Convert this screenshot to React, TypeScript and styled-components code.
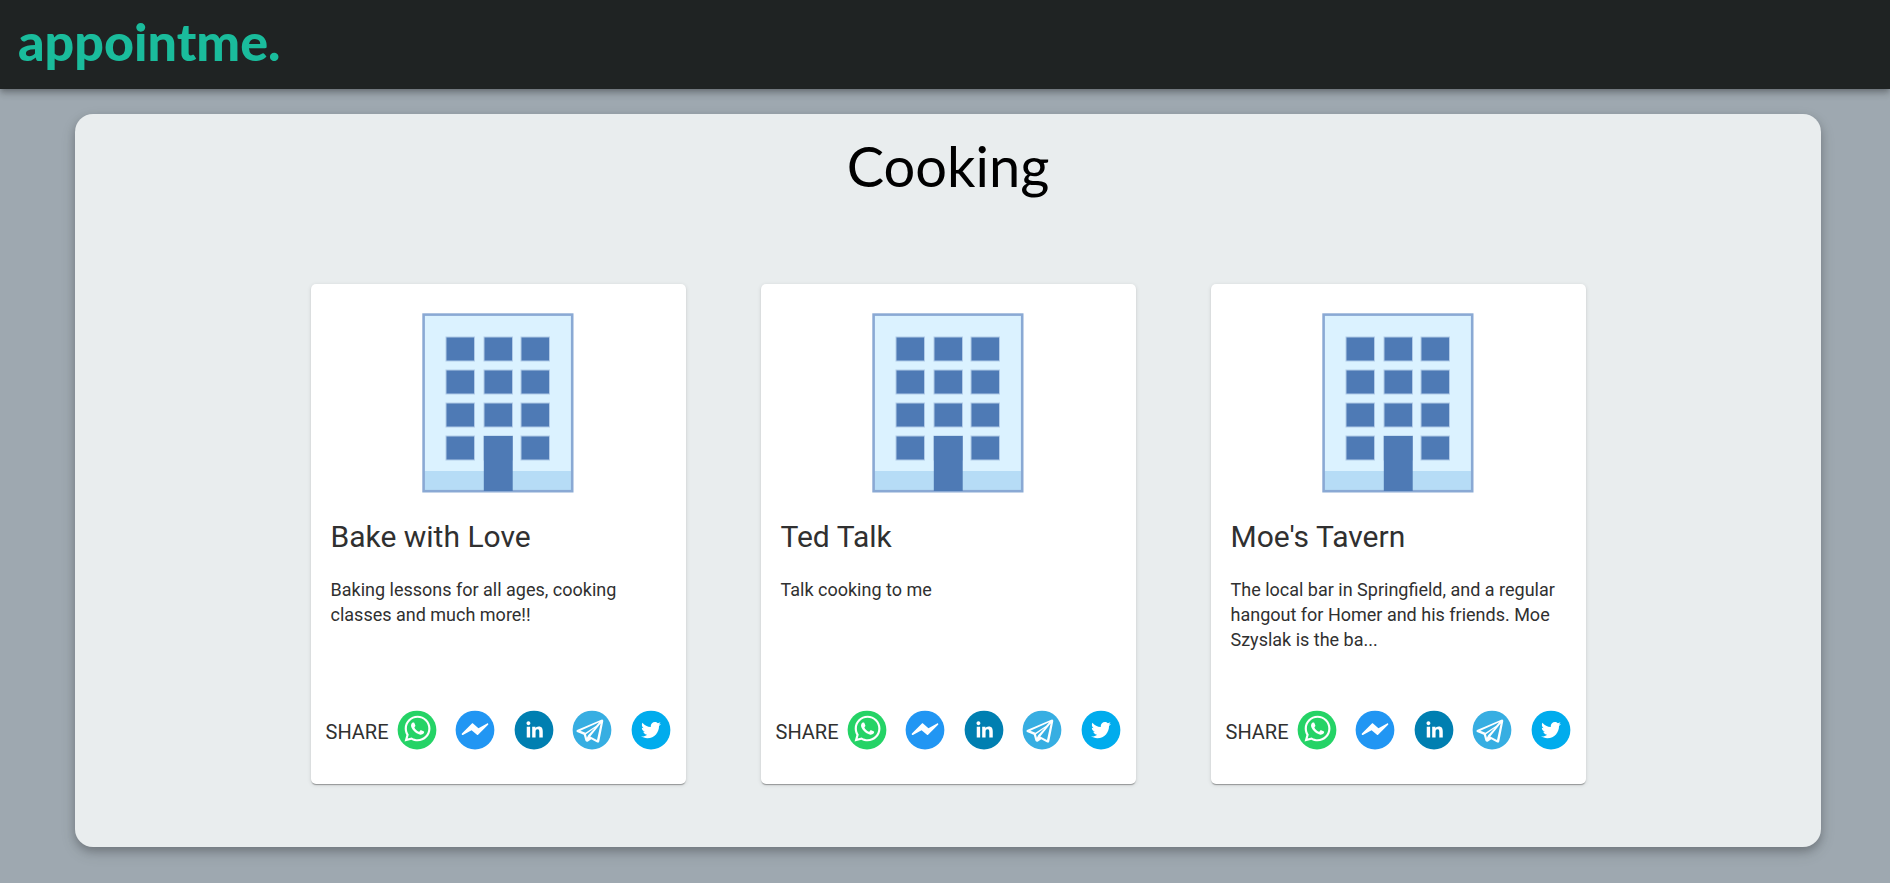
import React from "react";
import styled, { createGlobalStyle } from "styled-components";

const GlobalStyle = createGlobalStyle`
  *, *::before, *::after { box-sizing: border-box; }
  body {
    margin: 0;
    background: #9ea8b0;
    color: #303030;
    font-family: Roboto, "Liberation Sans", sans-serif;
  }
`;

const Header = styled.header`
  height: 89px;
  padding: 0 18px;
  background: #1f2323;
  box-shadow: 0 2px 5px -1px rgba(0, 0, 0, 0.2), 0 5px 6px rgba(0, 0, 0, 0.14), 0 1px 12px rgba(0, 0, 0, 0.12);
`;

const Logo = styled.a`
  display: inline-block;
  color: #1abc9c;
  font-family: Lato, sans-serif;
  font-size: 52px;
  font-weight: 900;
  line-height: 82px;
  text-decoration: none;
`;

const Panel = styled.main`
  margin: 25px 69px 36px 75px;
  padding: 12px 0 63px;
  background: #e9edee;
  border-radius: 18px;
  box-shadow: 0 4px 8px rgba(0, 0, 0, 0.2), 0 6px 16px rgba(0, 0, 0, 0.12);
`;

const Heading = styled.h1`
  margin: 0 0 78px;
  color: #000;
  font-family: Lato, sans-serif;
  font-size: 56px;
  font-weight: 400;
  line-height: 80px;
  text-align: center;
`;

const CardList = styled.div`
  display: flex;
  flex-wrap: wrap;
  justify-content: center;
  gap: 75px;
`;

const Card = styled.article`
  display: flex;
  flex-direction: column;
  width: 375px;
  min-height: 500px;
  padding: 29px 0 34px;
  background: #fff;
  border-radius: 5px;
  box-shadow: 0 2px 1px -1px rgba(0, 0, 0, 0.2), 0 1px 1px rgba(0, 0, 0, 0.14), 0 1px 4px rgba(0, 0, 0, 0.12);
`;

const Picture = styled.svg`
  display: block;
  align-self: center;
`;

const CardBody = styled.div`
  flex: 1;
  padding: 24px 20px;
`;

const CardTitle = styled.h2`
  margin: 0 0 20px;
  font-size: 30px;
  font-weight: 400;
  line-height: 40px;
`;

const Description = styled.p`
  margin: 0;
  font-size: 18px;
  line-height: 25px;
`;

const ShareRow = styled.div`
  display: flex;
  align-items: center;
  justify-content: space-between;
  padding: 0 15px;
`;

const ShareGroup = styled.div`
  display: flex;
  align-items: center;
  gap: 8px;
`;

const ShareLabel = styled.span`
  padding-top: 4px;
  font-size: 20px;
  line-height: 30px;
`;

const ShareButton = styled.button`
  display: block;
  padding: 0;
  border: 0;
  background: transparent;
  cursor: pointer;

  svg { display: block; }
`;

const windowRows = [24, 57, 90, 123];
const windowColumns = [24, 62, 99];

const Building = () => (
  <Picture width="152" height="180" viewBox="0 0 152 180" role="img" aria-label="Office building">
    <rect x="1" y="1" width="150" height="178" fill="#dbf2ff" />
    <rect x="1" y="158" width="150" height="21" fill="#b6dcf6" />
    <rect x="1.6" y="1.6" width="148.6" height="176.6" fill="none" stroke="#8aa9d4" strokeWidth="2.6" />
    {windowRows.map((y) =>
      windowColumns.map((x) => (
        <rect key={`${x}-${y}`} x={x} y={y} width="28.5" height="24" fill="#4e7ab5" stroke="#b1cbe8" strokeWidth="1" />
      )),
    )}
    <rect x="61.8" y="123" width="28.9" height="55" fill="#4e7ab5" />
  </Picture>
);

const networks = [
  {
    name: "WhatsApp",
    color: "#25d366",
    path: "m42.32286,33.93287c-0.5178,-0.2589 -3.04726,-1.49644 -3.52105,-1.66732c-0.4712,-0.17346 -0.81554,-0.2589 -1.15987,0.2589c-0.34175,0.51004 -1.33075,1.66474 -1.63108,2.00648c-0.30032,0.33658 -0.60064,0.36247 -1.11327,0.12945c-0.5178,-0.2589 -2.17994,-0.80259 -4.14759,-2.56312c-1.53269,-1.37217 -2.56312,-3.05503 -2.86603,-3.57283c-0.30033,-0.5178 -0.03366,-0.80259 0.22524,-1.06149c0.23301,-0.23301 0.5178,-0.59547 0.7767,-0.90616c0.25372,-0.31068 0.33657,-0.53333 0.51262,-0.85437c0.17088,-0.36246 0.08544,-0.64725 -0.04402,-0.90615c-0.12945,-0.2589 -1.15987,-2.79613 -1.58964,-3.80584c-0.41424,-1.00971 -0.84142,-0.88027 -1.15987,-0.88027c-0.29773,-0.02588 -0.64208,-0.02588 -0.98382,-0.02588c-0.34693,0 -0.90616,0.12945 -1.37736,0.62136c-0.4712,0.5178 -1.80194,1.76053 -1.80194,4.27186c0,2.51134 1.84596,4.945 2.10227,5.30747c0.2589,0.33657 3.63497,5.51458 8.80262,7.74113c1.23237,0.5178 2.1903,0.82848 2.94111,1.08738c1.23237,0.38836 2.35599,0.33657 3.24402,0.20712c0.99159,-0.15534 3.04985,-1.24272 3.47963,-2.45956c0.44013,-1.21683 0.44013,-2.22654 0.31068,-2.45955c-0.12945,-0.23301 -0.46601,-0.36247 -0.98382,-0.59548m-9.40068,12.84407l-0.02589,0c-3.05503,0 -6.08417,-0.82849 -8.72495,-2.38189l-0.62136,-0.37023l-6.47252,1.68286l1.73463,-6.29129l-0.41424,-0.64725c-1.70875,-2.71846 -2.6149,-5.85116 -2.6149,-9.07706c0,-9.39809 7.68934,-17.06155 17.15993,-17.06155c4.58253,0 8.88029,1.78642 12.11655,5.02268c3.23625,3.21036 5.02267,7.50812 5.02267,12.06476c-0.0078,9.3981 -7.69712,17.06155 -17.14699,17.06155m14.58906,-31.58846c-3.93529,-3.80584 -9.1133,-5.95471 -14.62789,-5.95471c-11.36055,0 -20.60848,9.2065 -20.61625,20.52564c0,3.61684 0.94757,7.14565 2.75211,10.26282l-2.92557,10.63564l10.93337,-2.85309c3.0136,1.63108 6.4052,2.4958 9.85634,2.49839l0.01037,0c11.36574,0 20.61884,-9.2091 20.62403,-20.53082c0,-5.48093 -2.14111,-10.64081 -6.03239,-14.51915",
  },
  {
    name: "Messenger",
    color: "#2196f3",
    path: "M 53.066406 21.871094 C 52.667969 21.339844 51.941406 21.179688 51.359375 21.496094 L 37.492188 29.058594 L 28.867188 21.660156 C 28.339844 21.207031 27.550781 21.238281 27.054688 21.730469 L 11.058594 37.726562 C 10.539062 38.25 10.542969 39.09375 11.0625 39.613281 C 11.480469 40.027344 12.121094 40.121094 12.640625 39.839844 L 26.503906 32.28125 L 35.136719 39.677734 C 35.667969 40.132812 36.457031 40.101562 36.949219 39.609375 L 52.949219 23.613281 C 53.414063 23.140625 53.464844 22.398438 53.066406 21.871094 Z",
  },
  {
    name: "LinkedIn",
    color: "#007fb1",
    path: "M20.4,44h5.4V26.6h-5.4V44z M23.1,18c-1.7,0-3.1,1.4-3.1,3.1c0,1.7,1.4,3.1,3.1,3.1 c1.7,0,3.1-1.4,3.1-3.1C26.2,19.4,24.8,18,23.1,18z M39.5,26.2c-2.6,0-4.4,1.4-5.1,2.8h-0.1v-2.4h-5.2V44h5.4v-8.6 c0-2.3,0.4-4.5,3.2-4.5c2.8,0,2.8,2.6,2.8,4.6V44H46v-9.5C46,29.8,45,26.2,39.5,26.2z",
  },
  {
    name: "Telegram",
    color: "#37aee2",
    path: "M48.2 15.2Q50.4 15.2 50 17.8L43.6 50.2Q42.8 53 40.4 51.8L30.8 46.9L25 50.6Q22 51.4 21.3 48.5L18.8 39.6L8 35.2Q5.8 33.4 8 31.8L46.8 15.6ZM43.6 19.7L13.4 33.3L21.6 36.4L38.6 25.2ZM45.8 21.6L29.2 42.2L40 47.8ZM36.5 28.8L22.4 38.7L23.8 44.5L25.8 40.2Z",
  },
  {
    name: "Twitter",
    color: "#00aced",
    path: "M48,22.1c-1.2,0.5-2.4,0.9-3.8,1c1.4-0.8,2.4-2.1,2.9-3.6c-1.3,0.8-2.7,1.3-4.2,1.6 C41.7,19.8,40,19,38.2,19c-3.6,0-6.6,2.9-6.6,6.6c0,0.5,0.1,1,0.2,1.5c-5.5-0.3-10.3-2.9-13.5-6.9c-0.6,1-0.9,2.1-0.9,3.3 c0,2.3,1.2,4.3,2.9,5.5c-1.1,0-2.1-0.3-3-0.8c0,0,0,0.1,0,0.1c0,3.2,2.3,5.8,5.3,6.4c-0.6,0.1-1.1,0.2-1.7,0.2c-0.4,0-0.8,0-1.2-0.1 c0.8,2.6,3.3,4.5,6.1,4.6c-2.2,1.8-5.1,2.8-8.2,2.8c-0.5,0-1.1,0-1.6-0.1c2.9,1.9,6.4,2.9,10.1,2.9c12.1,0,18.7-10,18.7-18.7 c0-0.3,0-0.6,0-0.8C46,24.5,47.1,23.4,48,22.1z",
  },
];

type Network = (typeof networks)[number];

const NetworkButton = ({ network }: { network: Network }) => (
  <ShareButton type="button" aria-label={`Share on ${network.name}`}>
    <svg width="40" height="40" viewBox="0 0 64 64" aria-hidden="true">
      <circle cx="32" cy="32" r="31" fill={network.color} />
      <path d={network.path} fill="#fff" fillRule="evenodd" />
    </svg>
  </ShareButton>
);

const businesses = [
  { name: "Bake with Love", description: "Baking lessons for all ages, cooking classes and much more!!" },
  { name: "Ted Talk", description: "Talk cooking to me" },
  {
    name: "Moe's Tavern",
    description: "The local bar in Springfield, and a regular hangout for Homer and his friends. Moe Szyslak is the ba...",
  },
];

const [firstNetwork, ...otherNetworks] = networks;

export default function App() {
  return (
    <>
      <GlobalStyle />
      <Header>
        <Logo href="#">appointme.</Logo>
      </Header>
      <Panel>
        <Heading>Cooking</Heading>
        <CardList>
          {businesses.map((business) => (
            <Card key={business.name}>
              <Building />
              <CardBody>
                <CardTitle>{business.name}</CardTitle>
                <Description>{business.description}</Description>
              </CardBody>
              <ShareRow>
                <ShareGroup>
                  <ShareLabel>SHARE</ShareLabel>
                  <NetworkButton network={firstNetwork} />
                </ShareGroup>
                {otherNetworks.map((network) => (
                  <NetworkButton key={network.name} network={network} />
                ))}
              </ShareRow>
            </Card>
          ))}
        </CardList>
      </Panel>
    </>
  );
}
